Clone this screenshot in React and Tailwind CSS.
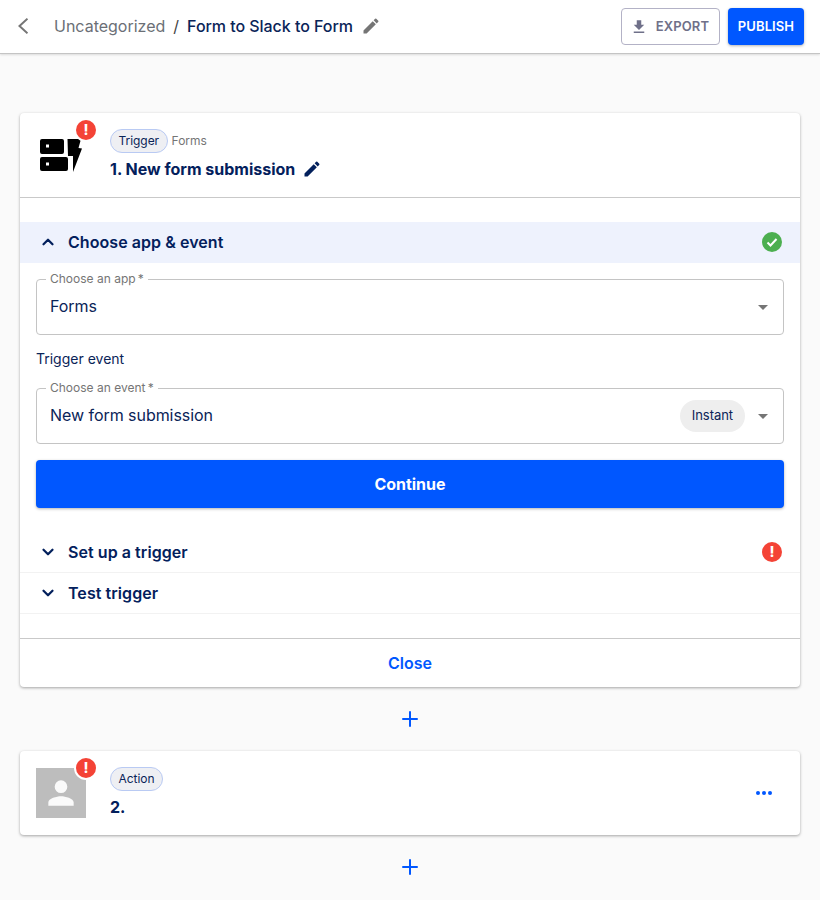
import { ChevronUp, ChevronDown, Plus } from "lucide-react";

const PENCIL = "M3 17.25V21h3.75L17.81 9.94l-3.75-3.75L3 17.25zM20.71 7.04a1 1 0 0 0 0-1.41l-2.34-2.34a1 1 0 0 0-1.41 0l-1.83 1.83 3.75 3.75 1.83-1.83z";

function Pencil({ className }) {
  return (
    <svg viewBox="0 0 24 24" className={className} fill="currentColor">
      <path d={PENCIL} />
    </svg>
  );
}

function AlertDot({ className = "" }) {
  return (
    <span className={"flex h-5 w-5 items-center justify-center rounded-full bg-[#f44336] text-sm font-extrabold leading-none text-white ring-2 ring-white " + className}>
      !
    </span>
  );
}

function Chip({ children }) {
  return (
    <span className="flex h-6 items-center rounded-full border border-[#b9caf3] bg-[#eeeff3] px-[7.5px] text-xs tracking-[-0.05px] text-[#0a2458]">
      {children}
    </span>
  );
}

function Caret() {
  return (
    <svg viewBox="0 0 10 5" className="h-[5px] w-[10px] shrink-0 text-[#757575]" fill="currentColor">
      <path d="M0 0h10L5 5z" />
    </svg>
  );
}

function SelectBox({ label, value, children }) {
  return (
    <div className="relative flex h-14 items-center justify-between rounded border border-[#c4c4c4] pl-[13px] pr-[15px]">
      <span className="absolute -top-[9px] left-[9px] bg-white px-[4px] text-xs leading-4 text-[#757575]">{label}{"\u2009"}*</span>
      <span className="pb-[2px] text-base tracking-[-0.05px] text-[#0a2458]">{value}</span>
      <div className="flex items-center gap-3">
        {children}
        <Caret />
      </div>
    </div>
  );
}

function StepRow({ title, open, status, className = "" }) {
  const Icon = open ? ChevronUp : ChevronDown;
  return (
    <div className={"flex h-[41px] items-center pl-[19px] pr-[18px] " + className}>
      <Icon size={18} strokeWidth={3} className="text-[#03205c]" />
      <span className="ml-[11px] text-base font-semibold tracking-[0.06px] text-[#03205c]">{title}</span>
      {status && <div className="ml-auto">{status}</div>}
    </div>
  );
}

function AddStep() {
  return (
    <div className="flex h-16 items-center justify-center">
      <Plus size={24} strokeWidth={2} className="text-[#0057ff]" />
    </div>
  );
}

export default function App() {
  return (
    <div className="min-h-[900px] bg-[#fafafa] font-['Inter',sans-serif]">
      <header className="flex h-[54px] items-center border-b border-[#c4c4c4] bg-white pl-[18px] pr-[16px] shadow-[0_1px_2px_rgba(0,0,0,0.12)]">
        <div className="flex items-center pb-[2px]">
          <svg viewBox="0 0 10 16" className="h-4 w-[10px] text-[#757575]" fill="none" stroke="currentColor" strokeWidth="2">
            <path d="M9.5 0.7L1.5 8l8 7.3" />
          </svg>
          <span className="ml-[26px] text-base text-[#6b6f76]">Uncategorized</span>
          <span className="mx-2 text-base text-[#444]">/</span>
          <span className="text-base font-medium tracking-[-0.05px] text-[#0a2458]">Form to Slack to Form</span>
          <Pencil className="ml-2 h-5 w-5 text-[#757575]" />
        </div>
        <div className="ml-auto flex items-center gap-2">
          <button className="flex h-[37px] w-[99px] items-center justify-center gap-2 rounded border border-[#b3b2c6] pr-[2px] text-[13px] font-semibold tracking-[0.1px] text-[#6f7089]">
            <svg viewBox="0 0 24 24" className="h-[18px] w-[18px]" fill="currentColor">
              <path d="M19 9h-4V3H9v6H5l7 7 7-7zM5 18v2h14v-2H5z" />
            </svg>
            EXPORT
          </button>
          <button className="flex h-[37px] w-[76px] items-center justify-center rounded bg-[#0057ff] text-[13px] font-semibold tracking-[0.1px] text-white shadow-[0_1px_3px_rgba(0,0,0,0.3)]">
            PUBLISH
          </button>
        </div>
      </header>

      <main className="px-5 pt-[59px]">
        <section className="rounded bg-white shadow-[0_1px_3px_rgba(0,0,0,0.35)]">
          <div className="flex h-[85px] border-b border-[#c9c9c9]">
            <div className="relative w-[90px] shrink-0">
              <svg viewBox="0 0 42 34" className="absolute left-5 top-[25px] h-[34px] w-[42px]" fill="#000">
                <path d="M2 1h20a2 2 0 0 1 2 2v11a2 2 0 0 1-2 2H2a2 2 0 0 1-2-2V3a2 2 0 0 1 2-2zM2 19h24a2 2 0 0 1 2 2v10a2 2 0 0 1-2 2H2a2 2 0 0 1-2-2V21a2 2 0 0 1 2-2z" />
                <path d="M27.5 1H41l-2.5 9 3.5.5L33 34V18h-5z" />
                <path d="M6 6.5h3v3H6zM6 24.5h3v3H6z" fill="#fff" />
              </svg>
              <AlertDot className="absolute left-[56px] top-[7px]" />
            </div>
            <div className="pt-4">
              <div className="flex items-center gap-1">
                <Chip>Trigger</Chip>
                <span className="text-xs text-[#757575]">Forms</span>
              </div>
              <div className="mt-1 flex items-center gap-[7px]">
                <span className="text-base font-bold text-[#03205c]">1. New form submission</span>
                <Pencil className="h-5 w-5 text-[#03205c]" />
              </div>
            </div>
          </div>

          <div className="pt-6">
            <StepRow
              title="Choose app & event"
              open
              className="bg-[#eef2fd] pb-px"
              status={
                <svg viewBox="0 0 20 20" className="h-5 w-5">
                  <circle cx="10" cy="10" r="10" fill="#4caf50" />
                  <path d="M5.5 10.5l3 3 6-6.5" fill="none" stroke="#fff" strokeWidth="2" />
                </svg>
              }
            />
            <div className="px-4 pt-4">
              <SelectBox label="Choose an app" value="Forms" />
              <p className="mt-[15px] text-sm leading-[17px] text-[#0a2458]">Trigger event</p>
              <div className="mt-[21px]">
                <SelectBox label="Choose an event" value="New form submission">
                  <span className="mr-px flex h-8 items-center rounded-full bg-[#eeeeee] px-3 text-[13px] tracking-[-0.05px] text-[#0a2458]">Instant</span>
                </SelectBox>
              </div>
              <button className="mt-4 h-12 w-full rounded bg-[#0057ff] text-base font-bold tracking-[-0.05px] text-white shadow-[0_1px_3px_rgba(0,0,0,0.3)]">
                Continue
              </button>
            </div>
            <div className="mt-6">
              <StepRow title="Set up a trigger" status={<AlertDot className="ring-0" />} className="border-b border-[#f2f2f2]" />
              <StepRow title="Test trigger" className="border-b border-[#f2f2f2]" />
            </div>
          </div>

          <div className="mt-6 flex h-[49px] items-center justify-center border-t border-[#c9c9c9] text-base font-semibold text-[#0057ff]">
            Close
          </div>
        </section>

        <AddStep />

        <section className="flex h-[84px] rounded bg-white shadow-[0_1px_3px_rgba(0,0,0,0.35)]">
          <div className="relative w-[90px] shrink-0">
            <div className="absolute left-4 top-[17px] flex h-[50px] w-[50px] items-center justify-center bg-[#bdbdbd]">
              <svg viewBox="0 0 24 24" className="h-[38px] w-[38px]" fill="#fafafa">
                <path d="M12 12a4 4 0 1 0 0-8 4 4 0 0 0 0 8zm0 2c-2.7 0-8 1.3-8 4v2h16v-2c0-2.7-5.3-4-8-4z" />
              </svg>
            </div>
            <AlertDot className="absolute left-[56px] top-[7px]" />
          </div>
          <div className="pt-4">
            <div className="flex"><Chip>Action</Chip></div>
            <div className="mt-1 text-base font-bold text-[#03205c]">2.</div>
          </div>
          <div className="ml-auto flex items-center pr-[28px]">
            <svg viewBox="0 0 16 4" className="h-1 w-4" fill="#0057ff">
              <circle cx="2" cy="2" r="2" />
              <circle cx="8" cy="2" r="2" />
              <circle cx="14" cy="2" r="2" />
            </svg>
          </div>
        </section>

        <AddStep />
      </main>
    </div>
  );
}
